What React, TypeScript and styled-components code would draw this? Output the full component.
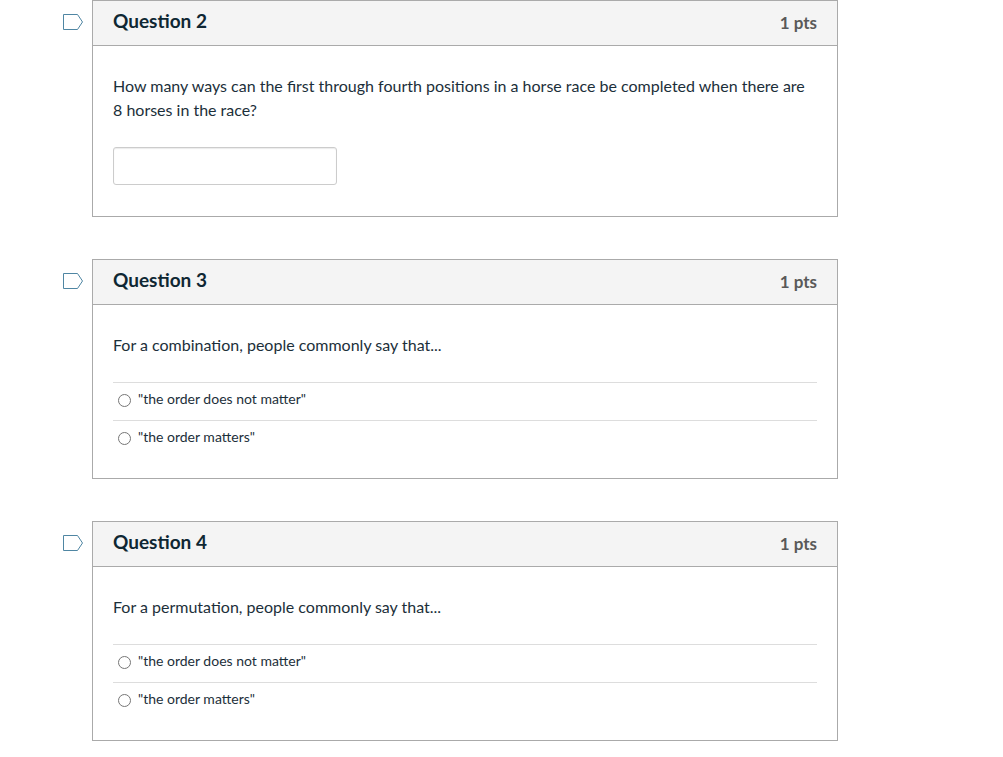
import React from "react";
import styled, { createGlobalStyle } from "styled-components";

const Global = createGlobalStyle`
  * { box-sizing: border-box; }
  body {
    margin: 0;
    background: #ffffff;
    color: #1c2f3a;
    font-family: Lato, "Liberation Sans", sans-serif;
    font-size: 16px;
    line-height: 24px;
  }
`;

const Quiz = styled.main`
  display: flex;
  flex-direction: column;
  gap: 42px;
  padding: 0 165px 16px 62px;
`;

const QuestionRow = styled.section`
  display: grid;
  grid-template-columns: 22px minmax(0, 1fr);
  column-gap: 8px;
  align-items: start;
`;

const FlagButton = styled.button`
  display: flex;
  margin: 13px 0 0;
  padding: 0;
  border: 0;
  background: none;
  cursor: pointer;
`;

const Card = styled.div`
  border: 1px solid #aaaaaa;
`;

const CardHeader = styled.header`
  display: flex;
  justify-content: space-between;
  align-items: center;
  height: 45px;
  padding: 0 20px;
  background: #f4f4f4;
  border-bottom: 1px solid #aaaaaa;
`;

const Title = styled.h2`
  margin: 0 0 4px;
  color: #0f2733;
  font-size: 19px;
  line-height: 24px;
  font-weight: 700;
`;

const Points = styled.span`
  color: #595959;
  font-size: 17px;
  font-weight: 700;
`;

const CardBody = styled.div`
  padding: 28px 20px 20px;
`;

const Prompt = styled.p`
  margin: 0 0 25px;
`;

const NumberField = styled.input`
  display: block;
  width: 224px;
  height: 38px;
  margin-bottom: 11px;
  padding: 8px;
  border: 1px solid #cccccc;
  border-radius: 3px;
  box-shadow: inset 0 1px 1px rgba(0, 0, 0, 0.08);
  font: inherit;
  color: inherit;
`;

const Answers = styled.fieldset`
  min-width: 0;
  margin: 0;
  padding: 0;
  border: 0;
`;

const Answer = styled.label`
  display: flex;
  align-items: center;
  gap: 7px;
  height: 38px;
  padding: 0 5px 6px;
  border-top: 1px solid #dddddd;
  font-size: 14px;
  line-height: 20px;
`;

const Radio = styled.input`
  width: 13px;
  height: 13px;
  margin: 4px 0 0;
`;

type Question = { id: number; prompt: string; answers?: string[] };

const questions: Question[] = [
  {
    id: 2,
    prompt:
      "How many ways can the first through fourth positions in a horse race be completed when there are 8 horses in the race?",
  },
  {
    id: 3,
    prompt: "For a combination, people commonly say that...",
    answers: ['"the order does not matter"', '"the order matters"'],
  },
  {
    id: 4,
    prompt: "For a permutation, people commonly say that...",
    answers: ['"the order does not matter"', '"the order matters"'],
  },
];

function FlagIcon() {
  return (
    <svg width="22" height="18" viewBox="0 0 22 18" fill="none" aria-hidden="true">
      <path d="M1.5 1.5H15.5L20.5 9L15.5 16.5H1.5Z" stroke="#4f86a3" />
    </svg>
  );
}

function QuestionCard({ id, prompt, answers }: Question) {
  const promptId = `prompt-${id}`;
  return (
    <QuestionRow>
      <FlagButton type="button" aria-label={`Flag question ${id}`}>
        <FlagIcon />
      </FlagButton>
      <Card>
        <CardHeader>
          <Title>Question {id}</Title>
          <Points>1 pts</Points>
        </CardHeader>
        <CardBody>
          <Prompt id={promptId}>{prompt}</Prompt>
          {answers ? (
            <Answers aria-labelledby={promptId}>
              {answers.map((answer) => (
                <Answer key={answer}>
                  <Radio type="radio" name={`question-${id}`} />
                  {answer}
                </Answer>
              ))}
            </Answers>
          ) : (
            <NumberField type="text" aria-labelledby={promptId} />
          )}
        </CardBody>
      </Card>
    </QuestionRow>
  );
}

export default function App() {
  return (
    <>
      <Global />
      <Quiz>
        {questions.map((question) => (
          <QuestionCard key={question.id} {...question} />
        ))}
      </Quiz>
    </>
  );
}
